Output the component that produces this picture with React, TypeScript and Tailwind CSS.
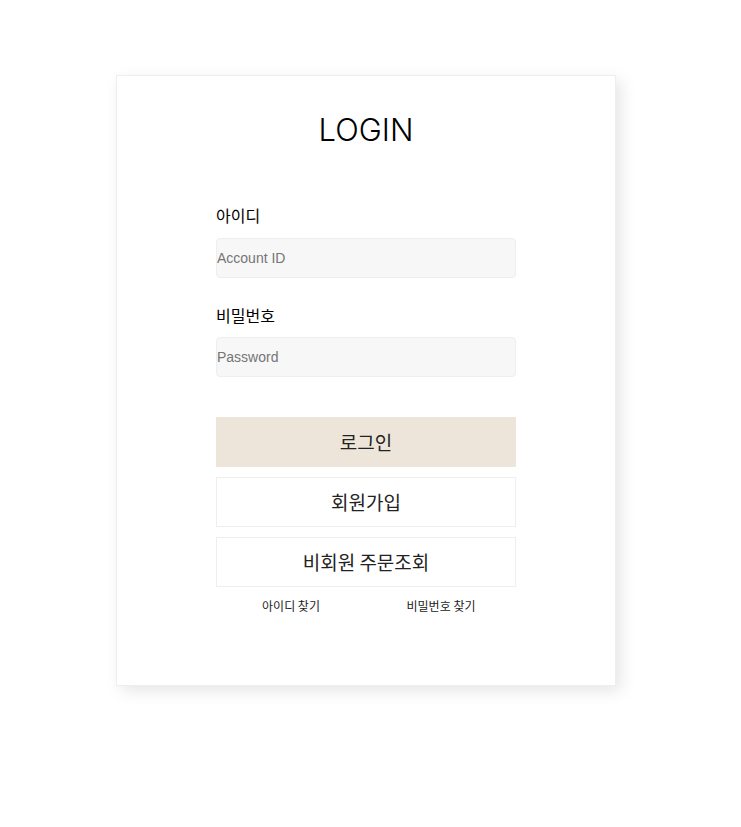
export default function App() {
  return (
    <div className="min-h-screen bg-white pt-[75px] font-['Noto_Sans_CJK_KR','Noto_Sans',sans-serif]">
      <div className="ml-[116px] w-[500px] border border-[#eeeeee] bg-white pt-[30px] pb-[70px] shadow-[5px_5px_15px_rgba(0,0,0,0.1)]">
        <h1 className="text-center font-['Inter',sans-serif] text-[31px] font-light leading-[48px] text-black">LOGIN</h1>

        <form className="mx-auto mt-[49px] flex w-[300px] flex-col">
          <label className="text-[16px] leading-[24px] font-normal text-black">아이디</label>
          <input
            type="text"
            placeholder="Account ID"
            className="mt-[11px] h-[40px] rounded-[4px] border border-[#eeeeee] bg-[#f7f7f7] font-['Liberation_Sans',sans-serif] text-[14px] placeholder:text-[#757575] outline-none"
          />

          <label className="mt-[25px] text-[16px] leading-[24px] font-normal text-black">비밀번호</label>
          <input
            type="password"
            placeholder="Password"
            className="mt-[10px] h-[40px] rounded-[4px] border border-[#eeeeee] bg-[#f7f7f7] font-['Liberation_Sans',sans-serif] text-[14px] placeholder:text-[#757575] outline-none"
          />

          <button type="button" className="mt-[40px] h-[50px] bg-[#ede5da] text-[19px] font-normal text-[#222]">로그인</button>
          <button type="button" className="mt-[10px] h-[50px] border border-[#eeeeee] bg-white text-[19px] font-normal text-[#222]">회원가입</button>
          <button type="button" className="mt-[10px] h-[50px] border border-[#eeeeee] bg-white text-[19px] font-normal text-[#222]">비회원 주문조회</button>

          <div className="mt-[10px] grid grid-cols-2 text-center text-[12px] leading-[18px] text-[#222]">
            <a href="#">아이디 찾기</a>
            <a href="#">비밀번호 찾기</a>
          </div>
        </form>
      </div>
    </div>
  );
}
